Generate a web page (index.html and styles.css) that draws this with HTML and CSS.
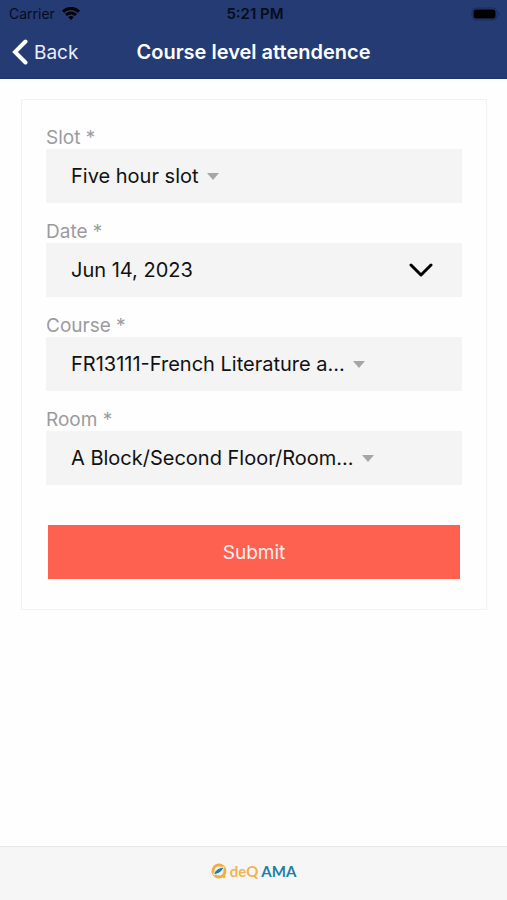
FILE: index.html
```
<!DOCTYPE html>
<html lang="en">
<head>
<meta charset="utf-8">
<meta name="viewport" content="width=device-width, initial-scale=1">
<title>Course level attendence</title>
<link rel="stylesheet" href="styles.css">
</head>
<body>
<header class="top">
  <div class="status">
    <div class="carrier">
      <span>Carrier</span>
      <svg class="wifi" viewBox="0 0 18 13" aria-hidden="true">
        <path d="M1 4.800 A11.300 11.300 0 0 1 17 4.800" />
        <path d="M4 8 A7.200 7.200 0 0 1 14 8" />
        <path class="dot" d="M6.300 10.200 A4 4 0 0 1 11.700 10.200 L9 13 Z" />
      </svg>
    </div>
    <span class="time">5:21 PM</span>
    <svg class="battery" viewBox="0 0 30 14" aria-hidden="true">
      <rect class="shell" x="1" y="1" width="25" height="12" rx="4" />
      <rect x="2.500" y="2.500" width="22" height="9" rx="2.500" />
      <path class="tip" d="M27.500 5 a2.200 2.200 0 0 1 0 4 Z" />
    </svg>
  </div>
  <nav class="bar">
    <a class="back" href="#">
      <svg viewBox="0 0 16 26" aria-hidden="true"><path d="M13.500 2.500 L3 13 L13.500 23.500" /></svg>
      <span>Back</span>
    </a>
    <h1>Course level attendence</h1>
  </nav>
</header>
<main>
  <form class="card">
    <div class="group">
      <label for="slot">Slot *</label>
      <div class="field">
        <select id="slot"><option>Five hour slot</option></select>
        <svg class="caret" viewBox="0 0 12 7" aria-hidden="true"><path d="M0 0 H12 L6 7 Z" /></svg>
      </div>
    </div>
    <div class="group">
      <label for="date">Date *</label>
      <div class="field">
        <input id="date" type="text" value="Jun 14, 2023">
        <svg class="chevron" viewBox="0 0 24 14" aria-hidden="true"><path d="M2 2 L12 12 L22 2" /></svg>
      </div>
    </div>
    <div class="group">
      <label for="course">Course *</label>
      <div class="field">
        <select id="course"><option>FR13111-French Literature a...</option></select>
        <svg class="caret" viewBox="0 0 12 7" aria-hidden="true"><path d="M0 0 H12 L6 7 Z" /></svg>
      </div>
    </div>
    <div class="group">
      <label for="room">Room *</label>
      <div class="field">
        <select id="room"><option>A Block/Second Floor/Room...</option></select>
        <svg class="caret" viewBox="0 0 12 7" aria-hidden="true"><path d="M0 0 H12 L6 7 Z" /></svg>
      </div>
    </div>
    <button class="submit" type="button">Submit</button>
  </form>
</main>
<footer>
  <svg class="logo" viewBox="0 0 16 16" aria-hidden="true">
    <circle cx="8" cy="8" r="6" />
    <path class="tail" d="M12 12.500 L14 14.500" />
    <path class="needle" d="M2.500 11.500 C4 7 7.500 4.500 13 4 C11.500 8.500 7.500 11.500 2.500 11.500 Z" />
  </svg>
  <span class="deq">deQ</span>
  <span class="ama">AMA</span>
</footer>
</body>
</html>
```
FILE: styles.css
```
* {
  box-sizing: border-box;
}

body {
  margin: 0;
  min-height: 100vh;
  display: flex;
  flex-direction: column;
  background: #fefefe;
  color: #111;
  font-family: Inter, "Liberation Sans", sans-serif;
  font-size: 19px;
}

.top {
  background: #243b74;
  border-bottom: 1px solid #1d3268;
}

.status {
  display: grid;
  grid-template-columns: 1fr auto 1fr;
  align-items: center;
  height: 26px;
  padding: 1px 6px 0 9px;
  color: #060c1c;
  font-size: 14px;
}

.carrier {
  display: flex;
  align-items: center;
  gap: 7px;
}

.wifi {
  width: 18px;
  height: 13px;
  fill: none;
  stroke: #000;
  stroke-width: 3;
}

.wifi .dot {
  fill: #000;
  stroke: none;
}

.time {
  font-size: 15px;
  font-weight: 600;
}

.battery {
  justify-self: end;
  width: 30px;
  height: 14px;
}

.battery .shell {
  fill: none;
  stroke: #1a2c5a;
}

.battery .tip {
  fill: #1a2c5a;
}

.bar {
  display: grid;
  grid-template-columns: 1fr auto 1fr;
  align-items: center;
  height: 52px;
  padding: 0 12px;
  color: #fff;
}

.back {
  display: flex;
  align-items: center;
  gap: 6px;
  color: #e9eefc;
  text-decoration: none;
}

.back svg {
  width: 16px;
  height: 26px;
  fill: none;
  stroke: #fff;
  stroke-width: 4;
  stroke-linecap: round;
}

h1 {
  margin: 0;
  font-size: 20px;
  font-weight: 600;
}

main {
  flex: 1;
  padding: 20px 20px 20px 21px;
}

.card {
  display: flex;
  flex-direction: column;
  gap: 17px;
  padding: 26px 24px 30px;
  border: 1px solid #f2f2f2;
}

.group {
  display: flex;
  flex-direction: column;
}

label {
  line-height: 23px;
  color: #9b9b9f;
}

.field {
  display: flex;
  align-items: center;
  gap: 8px;
  height: 54px;
  padding: 0 29px 0 25px;
  background: #f4f4f4;
}

select,
input {
  min-width: 0;
  margin: 0;
  padding: 0;
  border: 0;
  background: none;
  color: #111;
  font: inherit;
  font-size: 20px;
  appearance: none;
}

input {
  flex: 1;
}

.caret {
  flex: none;
  width: 12px;
  height: 7px;
  fill: #a6a6a6;
}

.chevron {
  flex: none;
  width: 24px;
  height: 14px;
  fill: none;
  stroke: #000;
  stroke-width: 3;
  stroke-linecap: round;
  stroke-linejoin: round;
}

.submit {
  height: 54px;
  margin: 23px 2px 0;
  border: 0;
  background: #ff6150;
  color: #fff0ee;
  font: inherit;
}

footer {
  display: flex;
  align-items: center;
  justify-content: center;
  gap: 3px;
  height: 54px;
  padding-bottom: 5px;
  border-top: 1px solid #e6e6e6;
  background: #f6f6f6;
  font-family: Lato, sans-serif;
  font-size: 15px;
  font-weight: 700;
}

.logo {
  width: 16px;
  height: 16px;
  fill: none;
  stroke: #f0ae45;
  stroke-width: 3;
}

.logo .needle {
  fill: #1b80a4;
  stroke: #f6f6f6;
  stroke-width: 1;
}

.deq {
  color: #f0b457;
}

.ama {
  color: #1b80a4;
}
```
